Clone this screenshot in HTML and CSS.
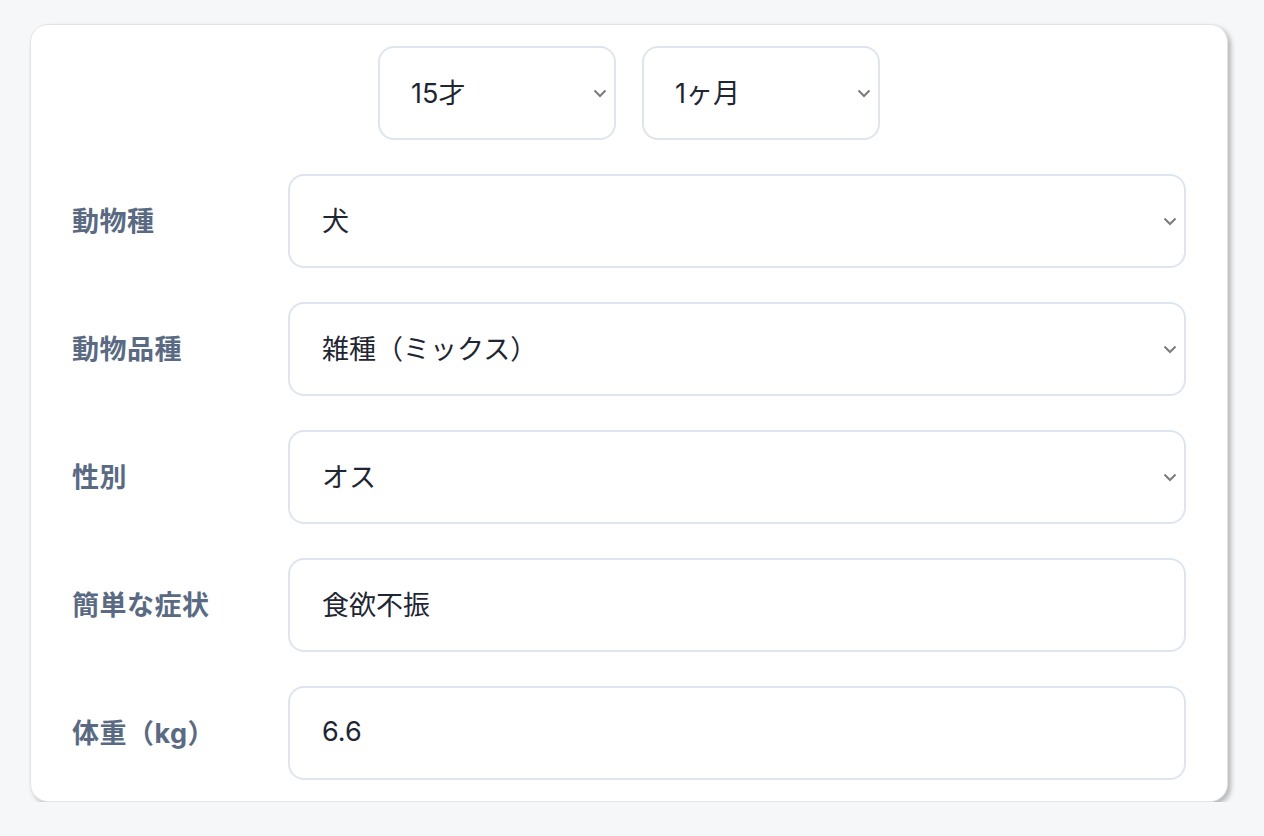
FILE: index.html
```html
<!DOCTYPE html>
<html lang="ja">
<head>
<meta charset="utf-8">
<title>ペット情報</title>
<link rel="stylesheet" href="styles.css">
</head>
<body>
<div class="card">
  <div class="age-row">
    <div class="field age">
      <span class="value">15才</span>
      <svg class="chev" width="14" height="9" viewBox="0 0 14 9"><path d="M1.5 1.5 L7 7 L12.5 1.5" fill="none" stroke="#7b7b7b" stroke-width="2"/></svg>
    </div>
    <div class="field age">
      <span class="value">1ヶ月</span>
      <svg class="chev" width="14" height="9" viewBox="0 0 14 9"><path d="M1.5 1.5 L7 7 L12.5 1.5" fill="none" stroke="#7b7b7b" stroke-width="2"/></svg>
    </div>
  </div>
  <div class="row">
    <div class="label">動物種</div>
    <div class="field">
      <span class="value">犬</span>
      <svg class="chev" width="14" height="9" viewBox="0 0 14 9"><path d="M1.5 1.5 L7 7 L12.5 1.5" fill="none" stroke="#7b7b7b" stroke-width="2"/></svg>
    </div>
  </div>
  <div class="row">
    <div class="label">動物品種</div>
    <div class="field">
      <span class="value">雑種（ミックス）</span>
      <svg class="chev" width="14" height="9" viewBox="0 0 14 9"><path d="M1.5 1.5 L7 7 L12.5 1.5" fill="none" stroke="#7b7b7b" stroke-width="2"/></svg>
    </div>
  </div>
  <div class="row">
    <div class="label">性別</div>
    <div class="field">
      <span class="value">オス</span>
      <svg class="chev" width="14" height="9" viewBox="0 0 14 9"><path d="M1.5 1.5 L7 7 L12.5 1.5" fill="none" stroke="#7b7b7b" stroke-width="2"/></svg>
    </div>
  </div>
  <div class="row">
    <div class="label">簡単な症状</div>
    <div class="field">
      <span class="value">食欲不振</span>
    </div>
  </div>
  <div class="row">
    <div class="label">体重（kg）</div>
    <div class="field">
      <span class="value">6.6</span>
    </div>
  </div>
</div>
</body>
</html>
```

FILE: styles.css
```css
html, body {
  margin: 0;
  padding: 0;
  background: #f6f7f9;
}
body {
  font-family: "Inter", "Noto Sans CJK JP", sans-serif;
  padding-top: 24px;
}
.card {
  box-sizing: border-box;
  width: 1198px;
  margin-left: 30px;
  background: #ffffff;
  border: 1px solid #e2e4e8;
  border-radius: 18px;
  box-shadow: 3px 3px 5px rgba(0, 0, 0, 0.26);
  padding: 21px 41px 21px 41px;
  display: flex;
  flex-direction: column;
  gap: 34px;
}
.age-row {
  display: flex;
  justify-content: center;
  gap: 26px;
}
.row {
  display: grid;
  grid-template-columns: 216px 1fr;
  align-items: center;
}
.label {
  font-size: 27px;
  font-weight: 700;
  color: #5a6a83;
  letter-spacing: 0.5px;
  padding-bottom: 4px;
}
.field {
  box-sizing: border-box;
  height: 94px;
  border: 2px solid #dfe5ef;
  border-radius: 16px;
  background: #fff;
  display: flex;
  align-items: center;
  padding: 0 7px 0 32px;
}
.field.age {
  width: 238px;
  padding-left: 31px;
}
.value {
  flex: 1;
  font-size: 27px;
  color: #1f2633;
  padding-bottom: 4px;
}
.chev {
  flex: none;
  display: block;
}
```
